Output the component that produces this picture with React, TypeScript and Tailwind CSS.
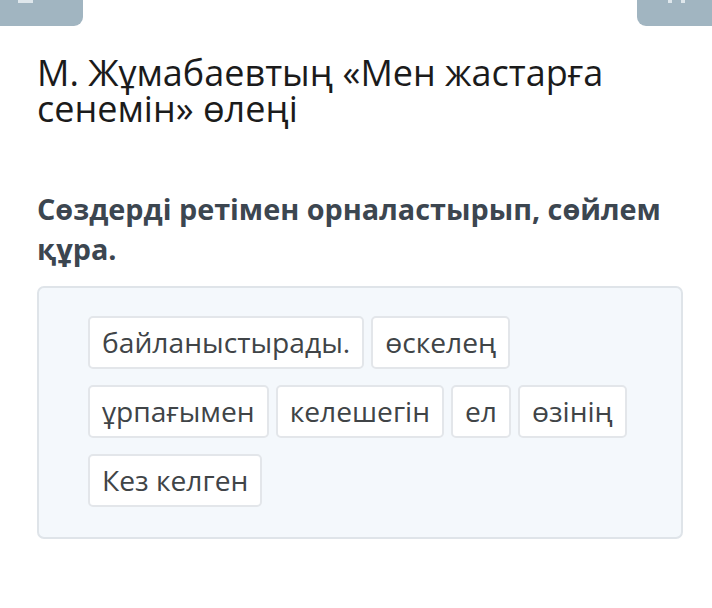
import React from "react";

const words: string[][] = [
  ["байланыстырады.", "өскелең"],
  ["ұрпағымен", "келешегін", "ел", "өзінің"],
  ["Кез келген"],
];

export default function App() {
  return (
    <div className="w-[712px] h-[608px] bg-white overflow-hidden font-['Open_Sans',sans-serif]">
      <div className="flex justify-between">
        <div className="w-[83px] h-[26px] bg-[#a1b5c1] rounded-br-[9px] relative">
          <div className="absolute left-[18px] top-0 w-[15px] h-[3px] bg-[#dfe7ec]" />
        </div>
        <div className="w-[75px] h-[26px] bg-[#a1b5c1] rounded-bl-[9px] relative">
          <div className="absolute left-[31px] top-0 w-[4px] h-[3px] bg-[#dfe7ec]" />
          <div className="absolute left-[44px] top-0 w-[4px] h-[3px] bg-[#dfe7ec]" />
        </div>
      </div>

      <div className="pl-[37px]">
        <h1 className="mt-[29px] text-[36px] leading-[36px] font-normal text-[#1b1b1b]">
          М. Жұмабаевтың «Мен жастарға <br />сенемін» өлеңі
        </h1>

        <h2 className="mt-[62px] text-[28.8px] leading-[40px] font-bold text-[#3c4650]">
          Сөздерді ретімен орналастырып, сөйлем <br />құра.
        </h2>

        <div className="mt-[17px] w-[646px] h-[253px] bg-[#f4f8fc] border-2 border-[#dfe4e9] rounded-[7px] pt-[28px] pl-[49px] flex flex-col gap-[16px]">
          {words.map((row, i) => (
            <div key={i} className="flex gap-[7px]">
              {row.map((w, j) => (
                <div
                  key={j}
                  className="h-[53px] px-[12px] flex items-center bg-white border-2 border-[#e3e6ea] rounded-[5px] text-[28.2px] text-[#404447]"
                >
                  {w}
                </div>
              ))}
            </div>
          ))}
        </div>
      </div>
    </div>
  );
}
